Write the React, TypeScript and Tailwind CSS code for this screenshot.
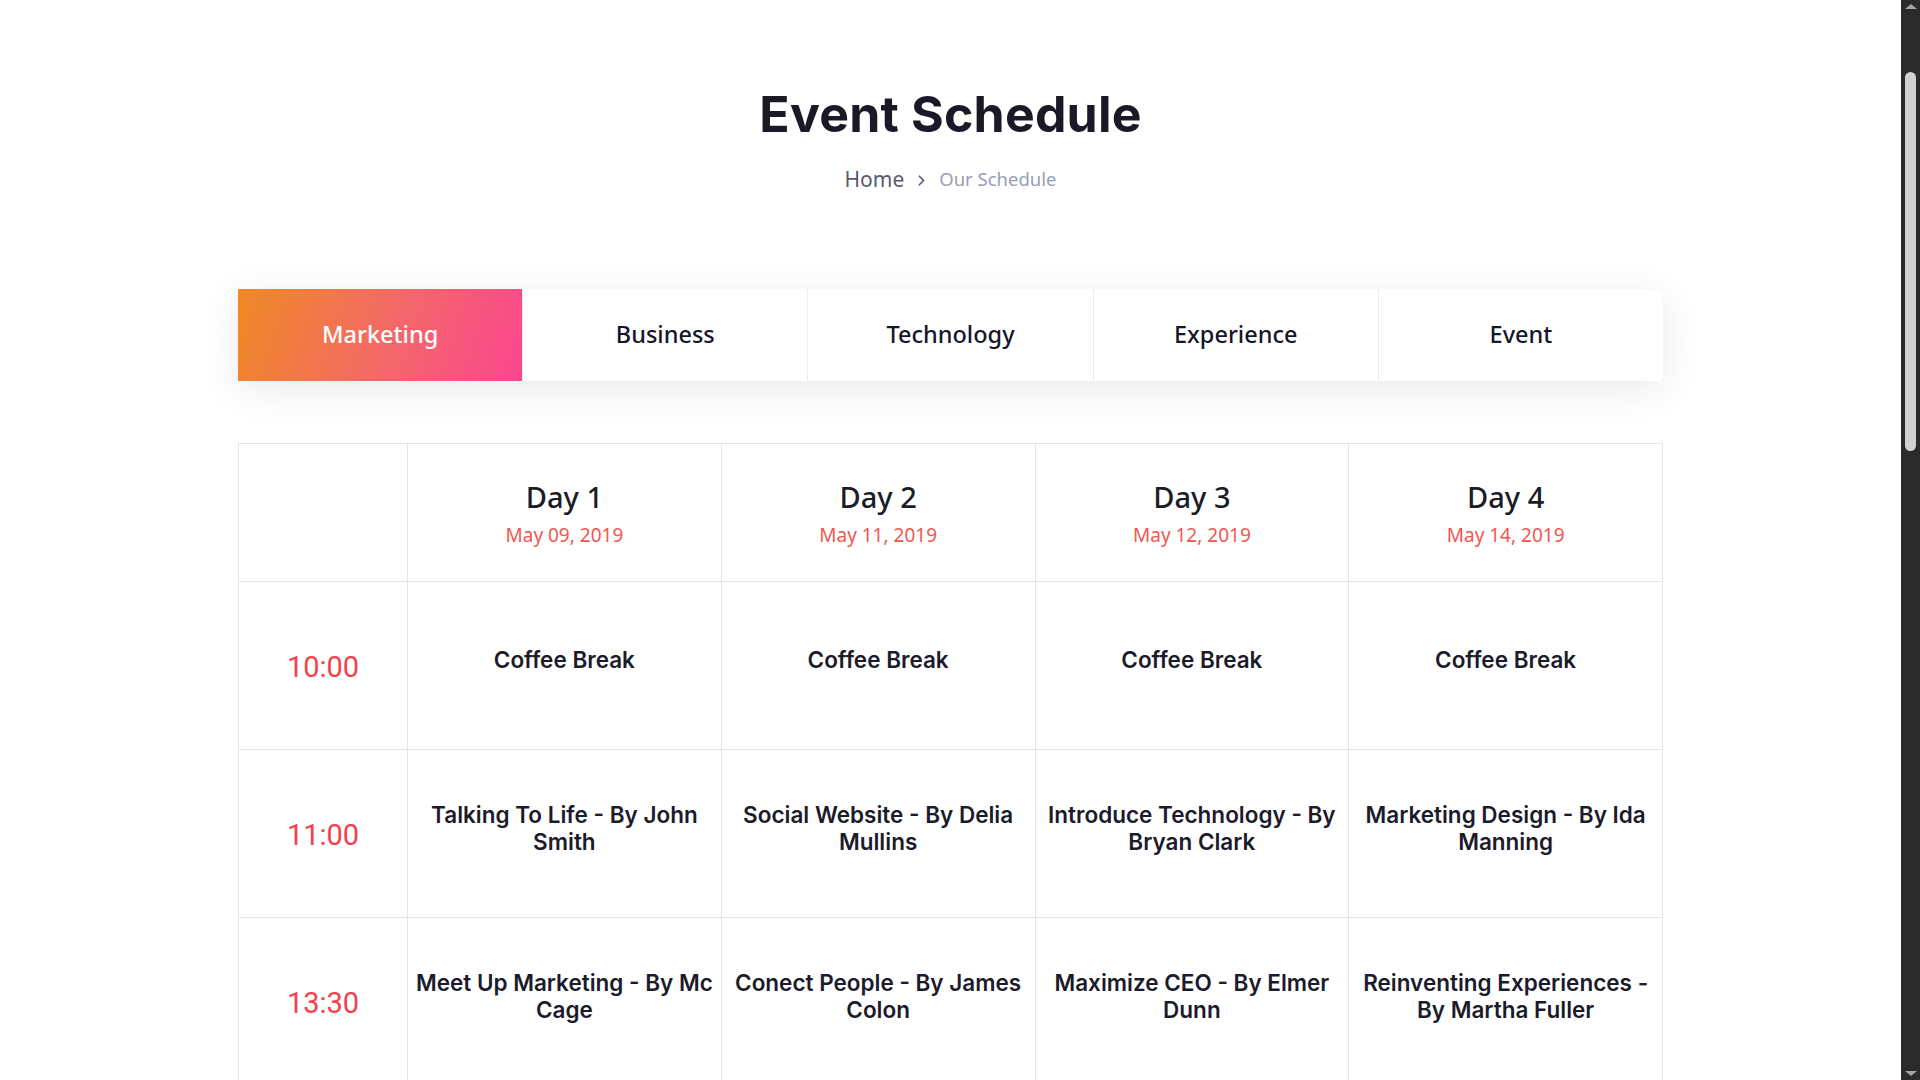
import { useState } from "react";
import { ChevronRight } from "lucide-react";

const Tabs = ["Marketing", "Business", "Technology", "Experience", "Event"];

const Days = [
  { name: "Day 1", date: "May 09, 2019" },
  { name: "Day 2", date: "May 11, 2019" },
  { name: "Day 3", date: "May 12, 2019" },
  { name: "Day 4", date: "May 14, 2019" },
];

const Rows = [
  { time: "10:00", events: ["Coffee Break", "Coffee Break", "Coffee Break", "Coffee Break"] },
  {
    time: "11:00",
    events: [
      "Talking To Life - By John Smith",
      "Social Website - By Delia Mullins",
      "Introduce Technology - By Bryan Clark",
      "Marketing Design - By Ida Manning",
    ],
  },
  {
    time: "13:30",
    events: [
      "Meet Up Marketing - By Mc Cage",
      "Conect People - By James Colon",
      "Maximize CEO - By Elmer Dunn",
      "Reinventing Experiences - By Martha Fuller",
    ],
  },
  { time: "14:45", events: ["Lunch Break", "Lunch Break", "Lunch Break", "Lunch Break"] },
  {
    time: "15:30",
    events: [
      "Brand Strategy - By Ruth Hayes",
      "Building Trust - By Oscar Reed",
      "Future Of AI - By Nora Wells",
      "Customer Journey - By Alan Price",
    ],
  },
];

// the window's dark scrollbar, drawn since the headless page hides the real one
function ScrollBar() {
  return (
    <div className="w-[19px] h-screen shrink-0 bg-[#2b2b2b] flex flex-col items-center">
      <div className="mt-[4px] w-0 h-0 border-x-[6px] border-x-transparent border-b-[5px] border-b-[#a3a3a3]"></div>
      <div className="mt-[63px] w-[11px] h-[379px] rounded-full bg-[#d1d1d1]"></div>
      <div className="mt-auto mb-[4px] w-0 h-0 border-x-[6px] border-x-transparent border-t-[5px] border-t-[#a3a3a3]"></div>
    </div>
  );
}

function App() {
  const [active, setActive] = useState(0);

  return (
    <div className="flex h-screen overflow-hidden bg-white">
      <div className="flex-1 h-screen overflow-y-auto [scrollbar-width:none]">
        <main className="pt-[80px] pb-[120px] font-['Noto_Sans',sans-serif]">
          <div className="text-center">
            <h1 className="text-[50px] leading-[68px] font-bold text-[#1a1a26] tracking-[0.2px] font-['Inter',sans-serif]">
              Event Schedule
            </h1>
            <div className="mt-[16px] flex items-center justify-center gap-[9px] leading-[30px]">
              <span className="text-[21px] text-[#565b70]">Home</span>
              <ChevronRight size={17} strokeWidth={2.4} className="text-[#565b70] mt-[3px]" />
              <span className="text-[18.5px] text-[#9a9db3]">Our Schedule</span>
            </div>
          </div>

          <div className="w-[1425px] mx-auto mt-[95px] flex bg-white rounded-r-[5px] shadow-[0_8px_40px_rgba(0,0,0,0.09)]">
            {Tabs.map((tab, index) => (
              <button
                key={tab}
                onClick={() => setActive(index)}
                className={
                  index === active
                    ? "flex-1 h-[92px] flex items-center justify-center text-[23.5px] font-medium text-white bg-[linear-gradient(108deg,#ef8a24_0%,#f4676a_55%,#fb4690_100%)]"
                    : "flex-1 h-[92px] flex items-center justify-center text-[23.5px] font-medium text-[#16162a] border-l border-[#ececec] first:border-l-0 last:rounded-r-[5px]"
                }
              >
                {tab}
              </button>
            ))}
          </div>

          <div className="w-[1425px] mx-auto mt-[62px] grid grid-cols-[169px_repeat(4,1fr)] border-l border-t border-[#e4e4e4]">
            <div className="h-[138px] border-r border-b border-[#e4e4e4]"></div>
            {Days.map((day) => (
              <div
                key={day.name}
                className="h-[138px] border-r border-b border-[#e4e4e4] flex flex-col items-center justify-center"
              >
                <div className="text-[29px] leading-[40px] font-medium text-[#1c1c28]">{day.name}</div>
                <div className="mt-[4px] text-[19px] leading-[28px] text-[#f2574f]">{day.date}</div>
              </div>
            ))}

            {Rows.map((row) => (
              <div key={row.time} className="contents">
                <div className="h-[168px] border-r border-b border-[#e4e4e4] flex items-center justify-center pt-[4px] text-[29px] text-[#f4414c] font-['Roboto',sans-serif]">
                  {row.time}
                </div>
                {row.events.map((event, index) => (
                  <div
                    key={index}
                    className="h-[168px] border-r border-b border-[#e4e4e4] flex items-center justify-center px-[4px] pb-[12px] text-center"
                  >
                    <span className="text-[22.5px] leading-[27px] font-semibold text-[#1b1b2b] font-['Inter',sans-serif]">
                      {event}
                    </span>
                  </div>
                ))}
              </div>
            ))}
          </div>
        </main>
      </div>
      <ScrollBar />
    </div>
  );
}

export default App;
